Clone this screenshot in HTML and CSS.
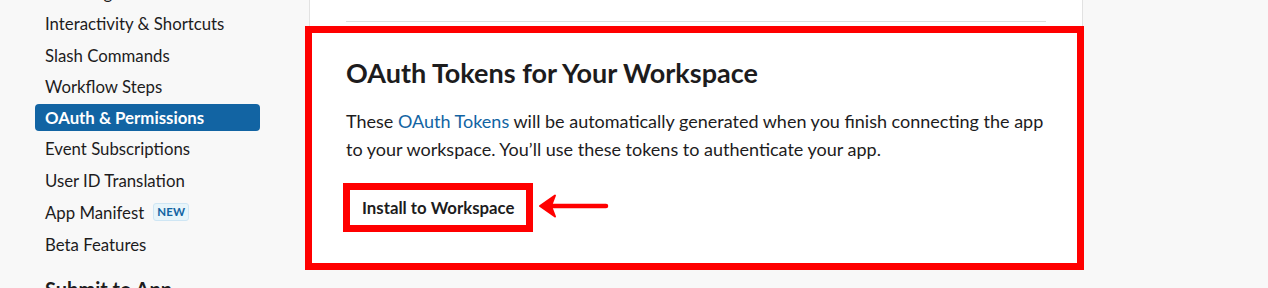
FILE: index.html
```html
<!DOCTYPE html>
<html>
    <head>
        <meta charset="utf-8" />
        <title>OAuth &amp; Permissions</title>
        <link rel="stylesheet" href="styles.css">
    </head>
    <body>
    <div class="page">
        <nav class="sidebar">
            <ul class="navi">
                <li><a href="#">Incoming Webhooks</a></li>
                <li><a href="#">Interactivity &amp; Shortcuts</a></li>
                <li><a href="#">Slash Commands</a></li>
                <li><a href="#">Workflow Steps</a></li>
                <li class="active"><a href="#">OAuth &amp; Permissions</a></li>
                <li><a href="#">Event Subscriptions</a></li>
                <li><a href="#">User ID Translation</a></li>
                <li class="tall"><a href="#">App Manifest <span class="badge">NEW</span></a></li>
                <li><a href="#">Beta Features</a></li>
            </ul>
            <h4 class="navi-title">Submit to App Directory</h4>
        </nav>

        <main class="card">
            <hr class="divider">
            <section class="tokens">
                <h2>OAuth Tokens for Your Workspace</h2>
                <p>These <a href="#">OAuth Tokens</a> will be automatically generated when you finish connecting the app to your workspace. You’ll use these tokens to authenticate your app.</p>
                <div class="actions">
                    <button type="button" class="install">Install to Workspace</button>
                    <svg class="arrow" width="72" height="26" viewBox="0 0 72 26">
                        <path d="M12 13 H68" stroke="#ff0000" stroke-width="4.5" stroke-linecap="round" fill="none"/>
                        <path d="M2 13 L17 2.5 L13 13 L17 23.5 Z" fill="#ff0000" stroke="#ff0000" stroke-width="2" stroke-linejoin="round"/>
                    </svg>
                </div>
            </section>
        </main>
    </div>
    </body>
</html>
```

FILE: styles.css
```css
html, body {
	margin: 0;
	height: 288px;
	overflow: hidden;
}
body {
	background-color: #f8f8f8;
	color: #1d1c1d;
	font-family: Lato, "Noto Sans", sans-serif;
}
.page {
	display: flex;
	align-items: flex-start;
}

/* sidebar */
.sidebar {
	width: 274px;
	padding-left: 35px;
	flex-shrink: 0;
}
.navi {
	list-style: none;
	margin: -21px 0 0 0;
	padding: 0;
	width: 225px;
	display: flex;
	flex-direction: column;
	gap: 4.3px;
}
.navi li {
	height: 27px;
	border-radius: 4px;
}
.navi li.tall {
	height: 28.5px;
}
.navi li a {
	display: flex;
	align-items: center;
	height: 100%;
	padding: 0 10px;
	font-size: 16.8px;
	color: #1d1c1d;
	text-decoration: none;
}
.navi li.active {
	background-color: #1264a3;
}
.navi li.active a {
	color: #ffffff;
	font-weight: 700;
}
.badge {
	display: inline-block;
	margin-left: 9px;
	height: 16px;
	line-height: 16px;
	padding: 0 3px;
	border: 1px solid #cfe6f4;
	border-radius: 3px;
	background-color: #e8f5fa;
	color: #1264a3;
	font-size: 11.5px;
	font-weight: 700;
	letter-spacing: 0.2px;
}
.navi-title {
	width: 190px;
	margin: 19px 0 0 10px;
	font-size: 20px;
	font-weight: 700;
}

/* main card */
.card {
	width: 772px;
	height: 270px;
	background-color: #ffffff;
	border: solid #e2e2e2;
	border-width: 0 1px;
}
.divider {
	margin: 21px 36px 0 36px;
	border: 0;
	border-top: 1px solid #dddddd;
}
.tokens {
	margin: 4px -2px 0 -5px;
	padding: 22px 31px 0 34px;
	height: 208px;
	border: 7px solid #ff0000;
}
.tokens h2 {
	margin: 0;
	font-size: 27px;
	line-height: 35px;
	font-weight: 700;
}
.tokens p {
	margin: 17px 0 0 0;
	font-size: 18px;
	line-height: 28px;
}
.tokens p a {
	color: #1264a3;
	text-decoration: none;
}
.actions {
	display: flex;
	align-items: center;
	margin-top: 20px;
	margin-left: -3px;
	gap: 5px;
}
.install {
	height: 49px;
	padding: 0 12px;
	border: 7px solid #ff0000;
	background-color: #ffffff;
	color: #1d1c1d;
	font-family: Lato, "Noto Sans", sans-serif;
	font-size: 16.8px;
	font-weight: 700;
}
.arrow {
	display: block;
	margin-top: -3px;
}
```
